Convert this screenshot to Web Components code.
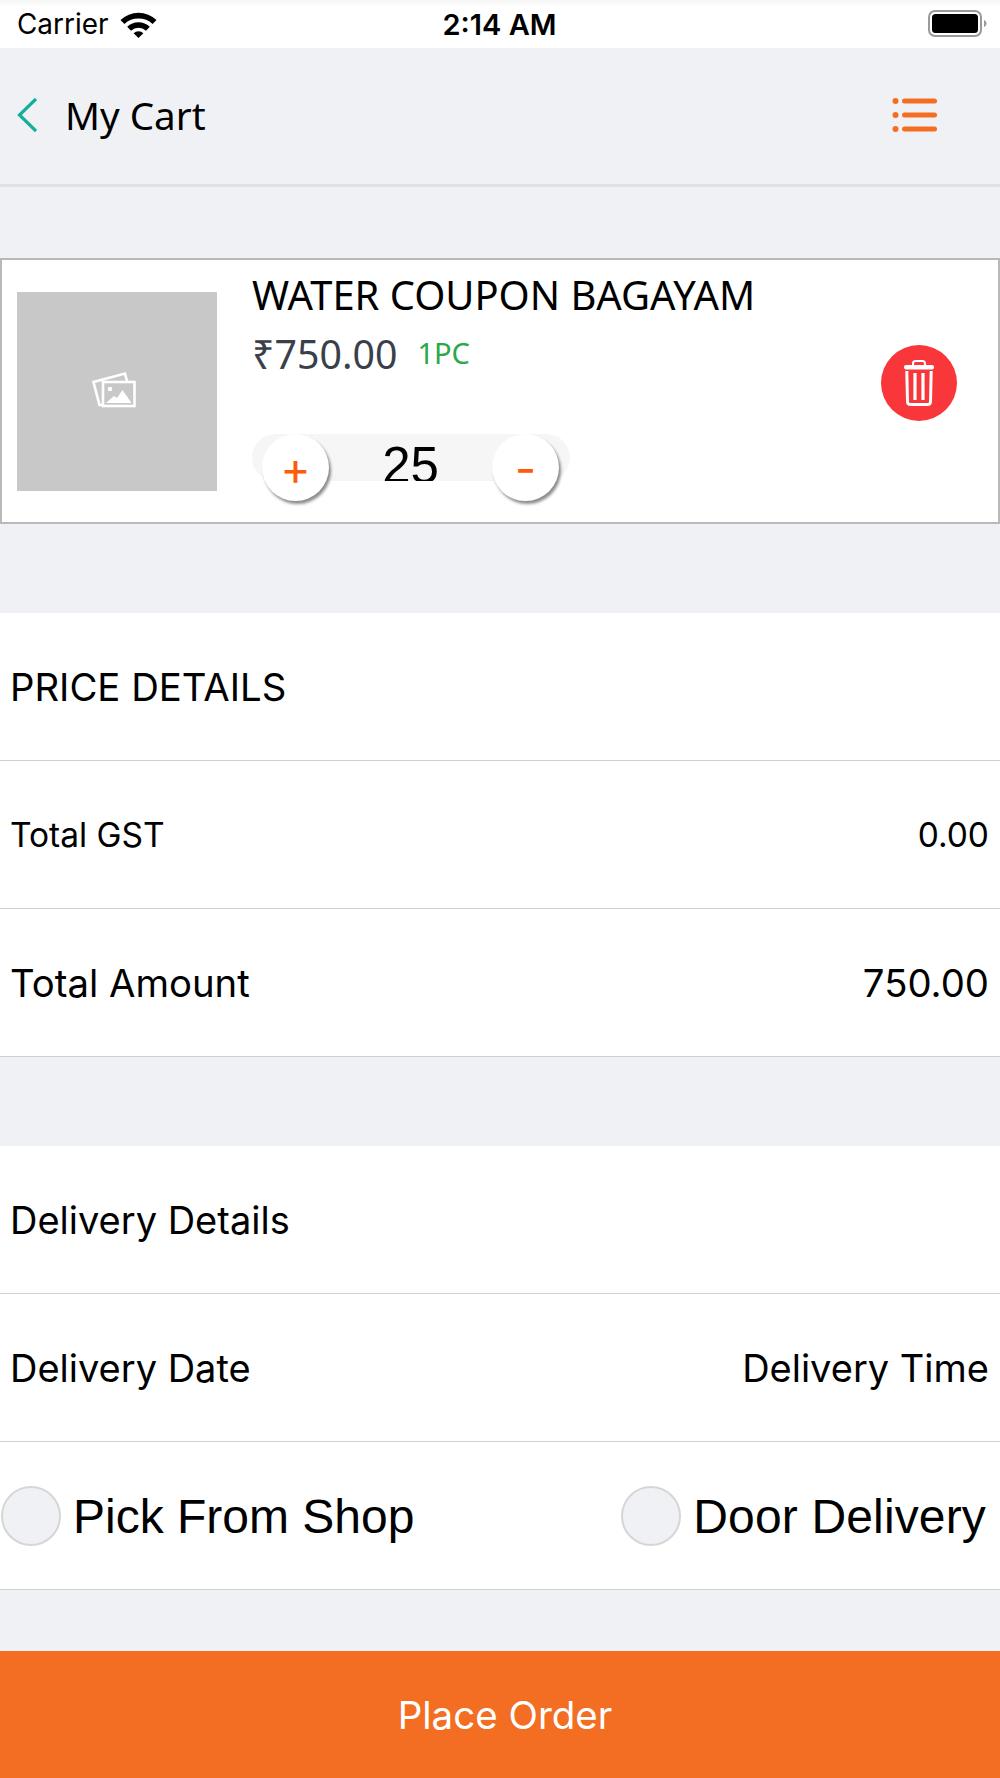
<!DOCTYPE html>
<html>
<head>
<meta charset="utf-8">
<style>
    html, body { margin: 0; padding: 0; }
    body {
        width: 1000px;
        height: 1778px;
        overflow: hidden;
        background: #f0f1f5;
        font-family: "Liberation Sans", sans-serif;
        display: flex;
        flex-direction: column;
    }
</style>
</head>
<body>
<status-bar></status-bar>
<app-header>My Cart</app-header>
<cart-item name="WATER COUPON BAGAYAM" price="₹750.00" unit="1PC" qty="25"></cart-item>

<info-panel style="margin-top:89px">
    <info-row size="38.3"><span>PRICE DETAILS</span></info-row>
    <info-row size="33.5"><span>Total GST</span><span slot="end">0.00</span></info-row>
    <info-row size="38.3" last><span>Total Amount</span><span slot="end">750.00</span></info-row>
</info-panel>

<info-panel style="margin-top:89px">
    <info-row size="38"><span>Delivery Details</span></info-row>
    <info-row size="38"><span>Delivery Date</span><span slot="end">Delivery Time</span></info-row>
    <info-row last flush>
        <radio-option>Pick From Shop</radio-option>
        <radio-option slot="end" style="letter-spacing:.15px">Door Delivery</radio-option>
    </info-row>
</info-panel>

<place-order>Place Order</place-order>

<script>
    class StatusBar extends HTMLElement {
        constructor() {
            super();
            this.attachShadow({ mode: 'open' });
        }

        connectedCallback() {
            this.shadowRoot.innerHTML = `
                <style>
                    :host {
                        display: grid;
                        grid-template-columns: 1fr auto 1fr;
                        align-items: center;
                        height: 48px;
                        padding: 0 12px 0 17px;
                        box-sizing: border-box;
                        background: linear-gradient(#f6f6f6, #fff 7px);
                        font-family: Inter, "Liberation Sans", sans-serif;
                        color: #000;
                    }
                    .left { display: flex; align-items: center; gap: 12px; font-size: 27.9px; }
                    .time { font-size: 29px; font-weight: 600; margin-right: 6px; }
                    .right { display: flex; justify-content: flex-end; }
                    svg { display: block; }
                </style>
                <div class="left">
                    <span>Carrier</span>
                    <svg width="37" height="27" viewBox="0 0 37 27">
                        <path d="M0.5 9 A26 26 0 0 1 36.5 9 L32.6 13 A20.5 20.5 0 0 0 4.4 13 Z" fill="#000"/>
                        <path d="M7.2 15.8 A16.4 16.4 0 0 1 29.8 15.8 L26 19.7 A11 11 0 0 0 11 19.7 Z" fill="#000"/>
                        <path d="M13.6 22.3 A7 7 0 0 1 23.4 22.3 L18.5 27 Z" fill="#000"/>
                    </svg>
                </div>
                <span class="time">2:14 AM</span>
                <div class="right">
                    <svg width="60" height="28" viewBox="0 0 60 28">
                        <rect x="1" y="1" width="52" height="25" rx="6" fill="none" stroke="#9a9a9a" stroke-width="2"/>
                        <rect x="4" y="4" width="46" height="19" rx="3.5" fill="#000"/>
                        <path d="M56 10 C58 11 58.500 12.500 58.500 13.500 C58.500 14.500 58 16 56 17 Z" fill="#9a9a9a"/>
                    </svg>
                </div>
            `;
        }
    }

    class AppHeader extends HTMLElement {
        constructor() {
            super();
            this.attachShadow({ mode: 'open' });
        }

        connectedCallback() {
            this.shadowRoot.innerHTML = `
                <style>
                    :host {
                        display: flex;
                        align-items: center;
                        height: 139px;
                        padding: 0 60px 2px 17px;
                        box-sizing: border-box;
                        background: #eff1f5;
                        border-bottom: 3px solid #dfe0e4;
                    }
                    .title {
                        flex: 1;
                        margin-left: 28px;
                        font: 38.6px "Noto Sans", sans-serif;
                        color: #000;
                    }
                    svg { display: block; }
                </style>
                <svg width="20" height="36" viewBox="0 0 20 36">
                    <path d="M19 2 L2.500 18 L19 34" fill="none" stroke="#12b09a" stroke-width="3.200"/>
                </svg>
                <span class="title"><slot></slot></span>
                <svg width="48" height="36" viewBox="0 0 48 36" fill="#f36e22">
                    <circle cx="3.500" cy="4" r="3"/>
                    <circle cx="3.500" cy="18" r="3"/>
                    <circle cx="3.500" cy="32" r="3"/>
                    <rect x="10" y="1.500" width="35" height="5" rx="2.500"/>
                    <rect x="10" y="15.500" width="35" height="5" rx="2.500"/>
                    <rect x="10" y="29.500" width="35" height="5" rx="2.500"/>
                </svg>
            `;
        }
    }

    class QtyStepper extends HTMLElement {
        constructor() {
            super();
            this.attachShadow({ mode: 'open' });
        }

        connectedCallback() {
            this.shadowRoot.innerHTML = `
                <style>
                    :host {
                        display: flex;
                        align-items: flex-start;
                        width: 318px;
                        height: 47px;
                        padding: 0 11px 0 10px;
                        box-sizing: border-box;
                        background: #f6f6f6;
                        border-radius: 24px;
                    }
                    .btn {
                        flex: none;
                        width: 67px;
                        height: 67px;
                        border-radius: 50%;
                        background: #fff;
                        box-shadow: 2px 3px 3px rgba(0,0,0,.45);
                        display: flex;
                        align-items: center;
                        justify-content: center;
                        color: #ff5a0a;
                        font: 46px/1 Inter, sans-serif;
                    }
                    .value {
                        flex: 1;
                        height: 47px;
                        overflow: hidden;
                        text-align: center;
                        font: 51px/64px "Liberation Sans", sans-serif;
                        color: #000;
                    }
                </style>
                <span class="btn">+</span>
                <span class="value"><slot></slot></span>
                <span class="btn">-</span>
            `;
        }
    }

    class CartItem extends HTMLElement {
        constructor() {
            super();
            this.attachShadow({ mode: 'open' });
        }

        connectedCallback() {
            const name = this.getAttribute('name');
            const price = this.getAttribute('price');
            const unit = this.getAttribute('unit');
            const qty = this.getAttribute('qty');

            this.shadowRoot.innerHTML = `
                <style>
                    :host {
                        display: flex;
                        align-items: stretch;
                        height: 266px;
                        margin-top: 71px;
                        box-sizing: border-box;
                        background: #fff;
                        border: 2px solid #b9b9b9;
                        padding: 0 41px 0 15px;
                    }
                    .thumb {
                        flex: none;
                        align-self: center;
                        width: 200px;
                        height: 199px;
                        margin-top: 1px;
                        background: #c8c8c8;
                        display: flex;
                        align-items: center;
                        justify-content: center;
                    }
                    .thumb svg { margin: -5px 6px 0 0; }
                    .info {
                        flex: 1;
                        margin-left: 35px;
                        padding-top: 10px;
                        display: flex;
                        flex-direction: column;
                    }
                    .name {
                        font: 39.9px/50px "Noto Sans", sans-serif;
                        color: #000;
                    }
                    .price-line {
                        display: flex;
                        align-items: flex-start;
                        gap: 20px;
                        height: 64px;
                        margin-top: 7px;
                    }
                    .price {
                        font: 39.3px/54px "Noto Sans", sans-serif;
                        color: #3a3f4a;
                    }
                    .unit {
                        margin-top: 6px;
                        font: 29px/40px "Noto Sans", sans-serif;
                        color: #2aa84a;
                    }
                    qty-stepper { margin-top: 43px; }
                    .trash {
                        flex: none;
                        align-self: center;
                        margin-top: -17px;
                        width: 76px;
                        height: 76px;
                        border-radius: 50%;
                        background: #f9363a;
                        display: flex;
                        align-items: center;
                        justify-content: center;
                    }
                    svg { display: block; }
                </style>
                <div class="thumb">
                    <svg width="44" height="38" viewBox="0 0 44 38" fill="none" stroke="#fff" stroke-width="2.600">
                        <path d="M11 35 L7.500 35 L1.500 12 L33 3.500 L35 11"/>
                        <rect x="11" y="12" width="31.500" height="24"/>
                        <circle cx="18" cy="19" r="2.300" fill="#fff" stroke="none"/>
                        <path d="M14 33 L22 26 L25 28 L30.500 20 L39.500 33 Z" fill="#fff" stroke="none"/>
                    </svg>
                </div>
                <div class="info">
                    <span class="name">${name}</span>
                    <div class="price-line">
                        <span class="price">${price}</span>
                        <span class="unit">${unit}</span>
                    </div>
                    <qty-stepper>${qty}</qty-stepper>
                </div>
                <div class="trash">
                    <svg width="32" height="46" viewBox="0 0 32 46" fill="none" stroke="#fff">
                        <path d="M10 5 V3.500 Q10 1 12.500 1 H19.500 Q22 1 22 3.500 V5" stroke-width="2"/>
                        <rect x="1" y="5" width="30" height="4.500" rx="2" fill="#fff" stroke="none"/>
                        <path d="M3.800 11 L4.500 42 Q4.700 44.500 7.500 44.500 H24.500 Q27.300 44.500 27.500 42 L28.200 11" stroke-width="3"/>
                        <path d="M12 13 V40 M20 13 V40" stroke-width="3.200"/>
                    </svg>
                </div>
            `;
        }
    }

    class InfoPanel extends HTMLElement {
        constructor() {
            super();
            this.attachShadow({ mode: 'open' });
        }

        connectedCallback() {
            this.shadowRoot.innerHTML = `
                <style>
                    :host { display: block; background: #fff; }
                </style>
                <slot></slot>
            `;
        }
    }

    class InfoRow extends HTMLElement {
        constructor() {
            super();
            this.attachShadow({ mode: 'open' });
        }

        connectedCallback() {
            const size = this.getAttribute('size') || 36;
            const flush = this.hasAttribute('flush');
            const last = this.hasAttribute('last');

            this.shadowRoot.innerHTML = `
                <style>
                    :host {
                        display: flex;
                        align-items: center;
                        justify-content: space-between;
                        height: 148px;
                        padding: ${flush ? '2px 14px 0 1px' : '0 11px 0 10px'};
                        box-sizing: border-box;
                        border-bottom: 1.500px solid ${last ? '#cfcfd2' : '#d0d0d0'};
                        font-family: Inter, "Liberation Sans", sans-serif;
                        font-size: ${size}px;
                        color: #000;
                    }
                </style>
                <slot></slot>
                <slot name="end"></slot>
            `;
        }
    }

    class RadioOption extends HTMLElement {
        constructor() {
            super();
            this.attachShadow({ mode: 'open' });
        }

        connectedCallback() {
            this.shadowRoot.innerHTML = `
                <style>
                    :host {
                        display: flex;
                        align-items: center;
                        gap: 12px;
                        font: 48px "Liberation Sans", sans-serif;
                        color: #000;
                    }
                    .dot {
                        width: 60px;
                        height: 60px;
                        margin-top: -2px;
                        box-sizing: border-box;
                        border-radius: 50%;
                        border: 2.500px solid #d6d6d6;
                        background: #f0f1f5;
                    }
                </style>
                <span class="dot"></span>
                <span><slot></slot></span>
            `;
        }
    }

    class PlaceOrder extends HTMLElement {
        constructor() {
            super();
            this.attachShadow({ mode: 'open' });
        }

        connectedCallback() {
            this.shadowRoot.innerHTML = `
                <style>
                    :host {
                        display: flex;
                        align-items: center;
                        justify-content: center;
                        height: 127px;
                        margin-top: auto;
                        padding-left: 10px;
                        background: #f36e22;
                        color: #fff;
                        font: 38.500px Inter, "Liberation Sans", sans-serif;
                    }
                </style>
                <slot></slot>
            `;
        }
    }

    customElements.define('status-bar', StatusBar);
    customElements.define('app-header', AppHeader);
    customElements.define('qty-stepper', QtyStepper);
    customElements.define('cart-item', CartItem);
    customElements.define('info-panel', InfoPanel);
    customElements.define('info-row', InfoRow);
    customElements.define('radio-option', RadioOption);
    customElements.define('place-order', PlaceOrder);
</script>
</body>
</html>
